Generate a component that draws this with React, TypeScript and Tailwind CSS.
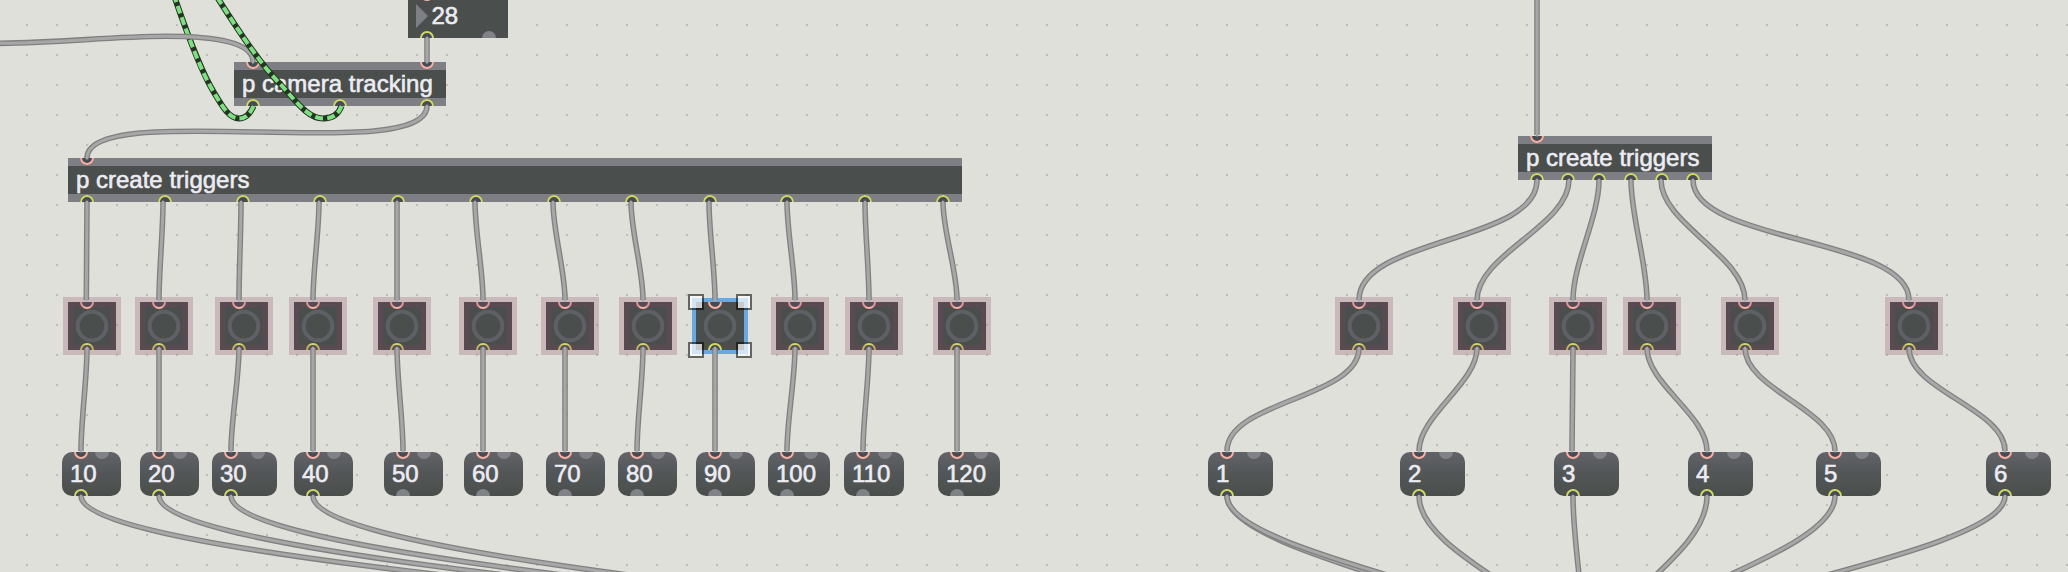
import React from "react";

type Pt = [number, number];

const bangsLeft = [68, 140, 220, 294, 378, 464, 546, 624, 696, 776, 850, 938];
const bangsRight = [1340, 1458, 1554, 1628, 1726, 1890];
const SELECTED = 696;
const BANG_Y = 302;
const MSG_Y = 452;

const messagesLeft = [
  { x: 62, w: 59, t: "10", wired: true },
  { x: 140, w: 59, t: "20", wired: true },
  { x: 212, w: 65, t: "30", wired: true },
  { x: 294, w: 59, t: "40", wired: true },
  { x: 384, w: 59, t: "50", wired: false },
  { x: 464, w: 59, t: "60", wired: false },
  { x: 546, w: 59, t: "70", wired: false },
  { x: 618, w: 59, t: "80", wired: false },
  { x: 696, w: 59, t: "90", wired: false },
  { x: 768, w: 62, t: "100", wired: false },
  { x: 844, w: 60, t: "110", wired: false },
  { x: 938, w: 62, t: "120", wired: false },
];
const messagesRight = [1208, 1400, 1554, 1688, 1816, 1986].map((x, i) => ({
  x,
  w: 65,
  t: String(i + 1),
  wired: true,
}));

const leftOutlets = Array.from({ length: 12 }, (_, k) => 19 + (k * 856) / 11);
const rightOutlets = [0, 1, 2, 3, 4, 5].map((k) => 19 + k * 31.2);

// A patch cord leaves and enters vertically; `pull` is how far its handles reach.
function cord([x1, y1]: Pt, [x2, y2]: Pt, pull?: number) {
  const d = Math.hypot(x2 - x1, y2 - y1);
  const c = pull ?? Math.min(d * 0.3, 63);
  return `M${x1} ${y1}C${x1} ${y1 + c} ${x2} ${y2 - c} ${x2} ${y2}`;
}

const cords: string[] = [
  "M-4 43.4C60 43 110 36.5 166 36.3C217 36.3 253 42.5 253 62",
  cord([427, 38], [427, 62]),
  cord([427, 106], [87, 158], 60),
  cord([1537, -60], [1537, 135]),
  ...bangsLeft.map((x, k) =>
    cord([k === 0 ? 87 : 163 + 78 * (k - 1), 202], [k === 0 ? 86.3 : x + 19, 300]),
  ),
  ...bangsRight.map((x, k) =>
    cord([[1537, 1569, 1599, 1631, 1661, 1693][k], 180], [x + 19, 300]),
  ),
  ...bangsLeft.map((x, k) => cord([x + 19, 348], [messagesLeft[k].x + 19, 451])),
  ...bangsRight.map((x, k) => cord([x + 19, 348], [messagesRight[k].x + 19 - (k === 2 ? 1 : 0), 451])),
  ...messagesLeft.filter((m) => m.wired).map((m) => cord([m.x + 19, 496], [1931, 766], 100)),
  cord([1227, 496], [1577, 671]),
  cord([1227, 496], [1603, 671]),
  ...messagesRight.slice(1).map((m) => cord([m.x + 19, 496], [1587, 671])),
];

// Signal cords run from the outlet upwards so the stripes start at the outlet.
const signalLeft =
  "M253.5 106C251 112 247 118.5 239 118.5C229 118.5 222 106 214 92.5C202 73 190 42 174.5 -3";
const signalRight =
  "M341.5 106C339 113 334 118.5 323 118.5C309 118.5 298 104 283 87C262 66 243 38 217 -3";

function SignalCord({ d }: { d: string }) {
  return (
    <g>
      <path d={d} stroke="#22371f" strokeWidth="6" />
      <path d={d} stroke="#7ee083" strokeWidth="4" strokeDasharray="8 4" />
    </g>
  );
}

function Port({ x, kind, off = false }: { x: number; kind: "in" | "out"; off?: boolean }) {
  const inlet = kind === "in";
  const arc = inlet ? "M1 0A6 6 0 0 0 13 0" : "M1 7A6 6 0 0 1 13 7";
  const disc = inlet ? "M0 0A7 7 0 0 0 14 0Z" : "M0 7A7 7 0 0 1 14 7Z";
  return (
    <svg
      width="14"
      height="7"
      viewBox="0 0 14 7"
      className={inlet ? "absolute top-0" : "absolute bottom-0"}
      style={{ left: x - 7 }}
    >
      <path d={disc} fill={off ? "#818288" : "#474c54"} />
      {!off && <path d={arc} fill="none" stroke={inlet ? "#fcb0a4" : "#d0d866"} strokeWidth="2" />}
    </svg>
  );
}

function PatcherBox(props: { x: number; y: number; w: number; label: string; ins: number[]; outs: number[] }) {
  return (
    <div
      className="absolute flex h-11 items-center border-y-8 border-[#7e7f85] bg-[#4a4e4c]"
      style={{ left: props.x, top: props.y, width: props.w }}
    >
      <span className="pl-2 leading-7 whitespace-pre">{props.label}</span>
      <div className="absolute inset-x-0 -inset-y-2">
        {props.ins.map((x) => (
          <Port key={x} x={x} kind="in" />
        ))}
        {props.outs.map((x) => (
          <Port key={x} x={x} kind="out" />
        ))}
      </div>
    </div>
  );
}

function Bang({ x }: { x: number }) {
  const selected = x === SELECTED;
  return (
    <div className="absolute size-12 bg-[#4a4e4c]" style={{ left: x, top: BANG_Y }}>
      <svg width="48" height="48" className="absolute inset-0">
        <circle cx="24" cy="24" r="14.3" fill="none" stroke="#5f6065" strokeWidth="4" />
      </svg>
      <Port x={19} kind="in" />
      <Port x={19} kind="out" />
      {selected ? (
        <div className="absolute -inset-1 border-4 border-[#6aa9e0]" />
      ) : (
        <div className="absolute -inset-[5px] border-10 border-[#894360]/25" />
      )}
    </div>
  );
}

function Message({ x, w, t, wired }: { x: number; w: number; t: string; wired: boolean }) {
  return (
    <div
      className="absolute flex h-11 items-center overflow-hidden rounded-[10px] bg-linear-to-b from-[#626368] via-[#525657] to-[#4a4e4b]"
      style={{ left: x, top: MSG_Y, width: w }}
    >
      <span className="pl-2 leading-7">{t}</span>
      <Port x={19} kind="in" />
      <Port x={w - 19} kind="in" off />
      <Port x={19} kind="out" off={!wired} />
    </div>
  );
}

export default function App() {
  return (
    <main
      className="relative h-[572px] w-[2068px] overflow-hidden bg-[#dfe0da] text-[24px] text-[#ececf2] [-webkit-text-stroke:0.6px_#ececf2]"
      style={{ fontFamily: '"Liberation Sans", Arial, sans-serif' }}
    >
      <svg width="2068" height="572" className="absolute inset-0">
        <defs>
          <pattern id="grid" x="26" y="24" width="30" height="30" patternUnits="userSpaceOnUse">
            <rect width="2" height="2" fill="#bcbdb8" />
          </pattern>
        </defs>
        <rect width="2068" height="572" fill="url(#grid)" />
      </svg>

      <div className="absolute top-[-6px] left-[408px] flex h-11 w-[100px] items-center bg-[#4a4e4c]">
        <svg width="12" height="24" className="ml-2">
          <path d="M0 0L12 12L0 24Z" fill="#7e7f85" />
        </svg>
        <span className="pl-[3.5px] leading-7">28</span>
        <Port x={19} kind="in" />
        <Port x={19} kind="out" />
        <Port x={81} kind="out" off />
      </div>
      <PatcherBox x={234} y={62} w={212} label="p camera tracking" ins={[19, 193]} outs={[19, 106, 193]} />
      <PatcherBox x={68} y={158} w={894} label="p create triggers" ins={[19]} outs={leftOutlets} />
      <PatcherBox x={1518} y={136} w={194} label="p create triggers" ins={[19]} outs={rightOutlets} />

      {[...bangsLeft, ...bangsRight].map((x) => (
        <Bang key={x} x={x} />
      ))}
      {[...messagesLeft, ...messagesRight].map((m) => (
        <Message key={m.t} {...m} />
      ))}

      <svg width="2068" height="572" className="absolute inset-0" fill="none">
        <SignalCord d={signalLeft} />
        {cords.map((d) => (
          <g key={d}>
            <path d={d} stroke="#808080" strokeWidth="5.6" />
            <path d={d} stroke="#a7a7a7" strokeWidth="3" strokeLinecap="round" />
          </g>
        ))}
        <SignalCord d={signalRight} />
      </svg>

      {[688, 736].map((x) =>
        [294, 342].map((y) => (
          <div
            key={`${x}-${y}`}
            className="absolute size-4 border-2 border-black/55 bg-white/70 bg-clip-padding"
            style={{ left: x, top: y }}
          />
        )),
      )}
    </main>
  );
}
